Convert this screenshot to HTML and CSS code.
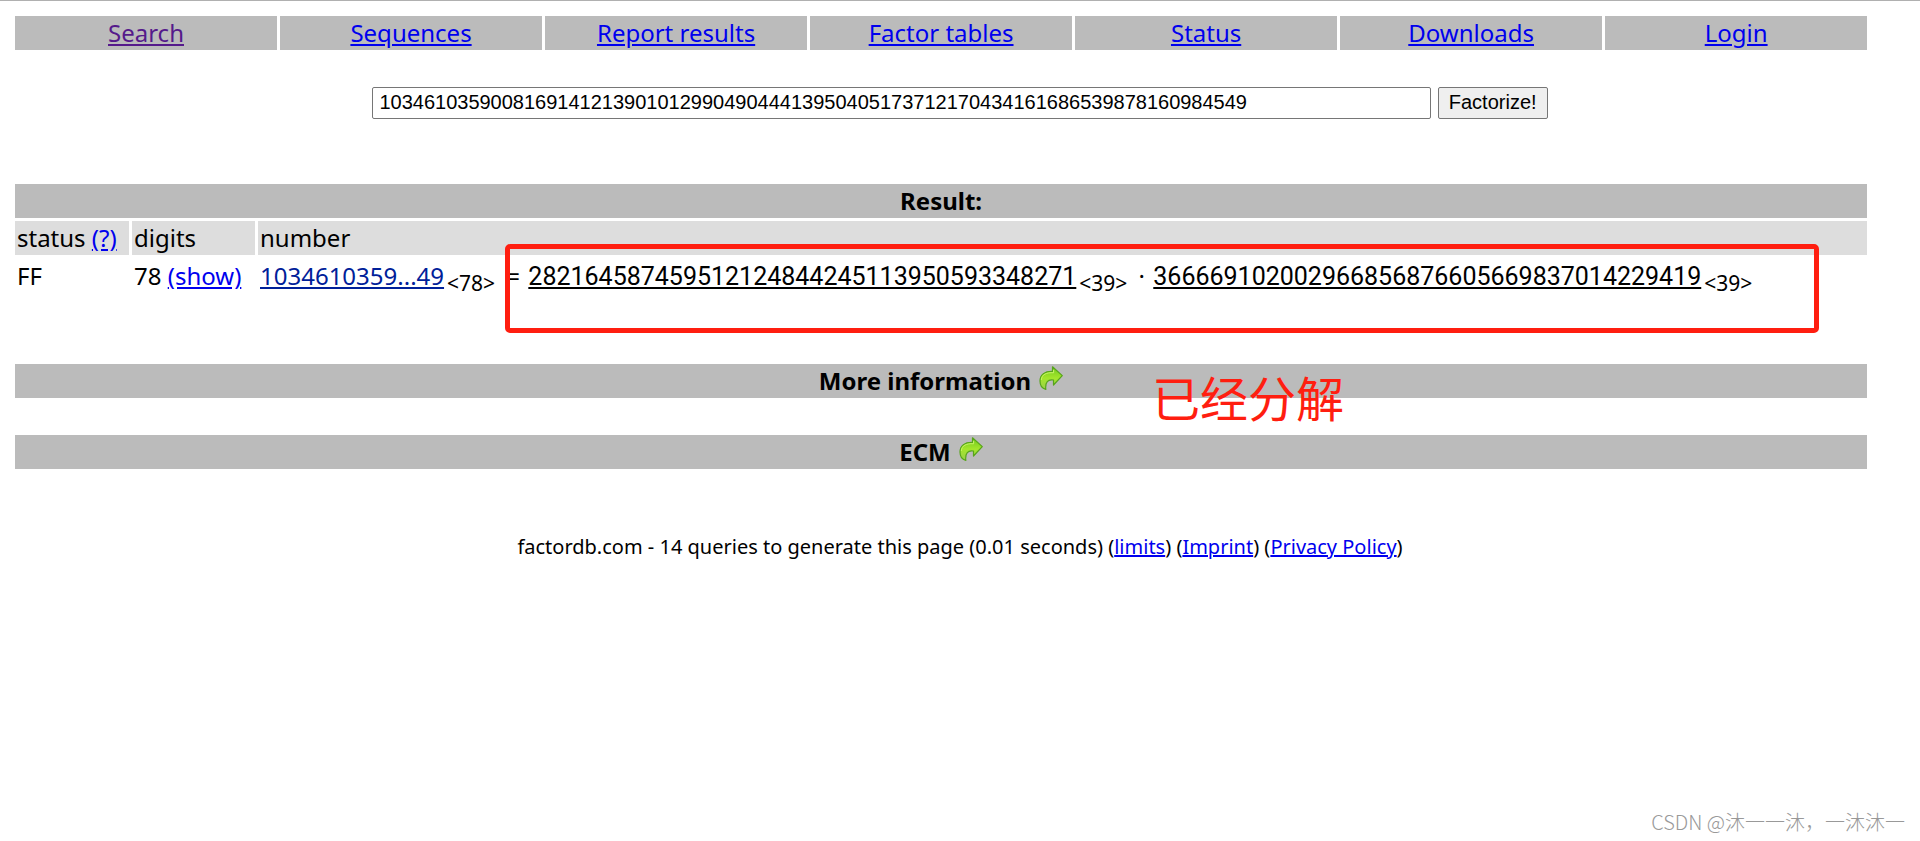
FILE: index.html
```
<!DOCTYPE html>
<html lang="en">
<head>
    <meta charset="UTF-8">
    <meta name="viewport" content="width=device-width, initial-scale=1.0">
    <title>factordb.com</title>
    <link rel="stylesheet" href="styles.css">
</head>
<body>
    <nav class="menu">
        <a class="visited" href="#search">Search</a>
        <a href="#sequences">Sequences</a>
        <a href="#report">Report results</a>
        <a href="#tables">Factor tables</a>
        <a href="#status">Status</a>
        <a href="#downloads">Downloads</a>
        <a href="#login">Login</a>
    </nav>

    <form class="search" id="search">
        <input class="query" type="text" name="query" aria-label="Number" value="103461035900816914121390101299049044413950405173712170434161686539878160984549">
        <button class="btn" type="submit">Factorize!</button>
    </form>

    <div class="result">
        <table class="result-table">
            <thead>
                <tr>
                    <th class="bar" colspan="3">Result:</th>
                </tr>
                <tr class="columns">
                    <th class="col-status">status <a href="#status-help">(?)</a></th>
                    <th class="col-digits">digits</th>
                    <th>number</th>
                </tr>
            </thead>
            <tbody>
                <tr>
                    <td>FF</td>
                    <td>78 <a href="#show">(show)</a></td>
                    <td><a class="composite" href="#n">1034610359...49</a><sub>&lt;78&gt;</sub> = <a class="prime" href="#p">282164587459512124844245113950593348271</a><sub>&lt;39&gt;</sub> · <a class="prime" href="#q">366669102002966856876605669837014229419</a><sub>&lt;39&gt;</sub></td>
                </tr>
            </tbody>
        </table>
        <div class="mark"></div>
    </div>

    <svg class="defs" aria-hidden="true">
        <defs>
            <linearGradient id="green" x1="0" y1="0" x2="0" y2="1">
                <stop offset="0" stop-color="#6fc81c"/>
                <stop offset="0.5" stop-color="#a4e62c"/>
                <stop offset="1" stop-color="#9ad04a"/>
            </linearGradient>
            <symbol id="arrow" viewBox="0 0 24 24">
                <path d="M13.5 0.8 L23.3 9.6 L14.5 19 V14 C9 13 6 16 6.8 23.4 C3 22.5 1 19.5 1 15 C1 8.5 6 5 13.5 5.4 Z" fill="url(#green)" stroke="#57a51b" stroke-width="1.2" stroke-linejoin="round"/>
                <path d="M14.6 3.8 V6.8 C7.5 6.2 2.6 8.6 2.3 14" fill="none" stroke="#c9f468" stroke-width="1"/>
            </symbol>
        </defs>
    </svg>

    <h2 class="bar section">More information
        <a href="#more" aria-label="Show more information"><svg class="icon"><use href="#arrow"/></svg></a>
        <span class="note" lang="zh">已经分解</span>
    </h2>
    <h2 class="bar section">ECM
        <a href="#ecm" aria-label="Show ECM"><svg class="icon"><use href="#arrow"/></svg></a>
    </h2>

    <footer class="footer">
        factordb.com - 14 queries to generate this page (0.01 seconds) (<a href="#limits">limits</a>) (<a href="#imprint">Imprint</a>) (<a href="#privacy">Privacy Policy</a>)
    </footer>

    <div class="watermark" lang="zh">CSDN @沐一一沐，一沐沐一</div>
</body>
</html>
```
FILE: styles.css
```
html {
    border-top: 1px solid #b0b0b0;
}
body {
    font-family: "Noto Sans", "Open Sans", sans-serif;
    font-size: 24px;
    line-height: 30px;
    background-color: white;
    color: black;
    margin: 15px;
}
a {
    color: #0000ee;
}
.visited {
    color: #551a8b;
}
.menu {
    display: grid;
    grid-template-columns: repeat(7, 1fr);
    gap: 3px;
    width: 98%;
}
.menu a {
    background: #bbbbbb;
    text-align: center;
    padding: 2px;
}
.search {
    display: flex;
    justify-content: center;
    gap: 7px;
    margin: 37px 0 65px;
}
.query,
.btn {
    font-family: "Liberation Sans", Arial, sans-serif;
    font-size: 20px;
    height: 32px;
    box-sizing: border-box;
    border: 1px solid #767676;
    border-radius: 2px;
    color: black;
}
.query {
    width: 56%;
    padding: 0 6px 2px;
}
.btn {
    background: #efefef;
    padding: 0 10px 2px;
}
.result {
    position: relative;
    width: 98%;
    margin-bottom: 34px;
}
.result-table {
    border-collapse: separate;
    border-spacing: 3px;
    margin: -3px;
    width: calc(100% + 6px);
}
.result-table th,
.result-table td {
    padding: 2px;
    text-align: left;
    vertical-align: top;
    white-space: nowrap;
}
.bar {
    background: #bbbbbb;
    font-weight: bold;
}
.result-table .bar {
    text-align: center;
}
.columns th {
    background: #dddddd;
    font-weight: normal;
}
.result-table td {
    padding-top: 3px;
    height: 67px;
}
.col-status {
    width: 110px;
}
.col-digits {
    width: 119px;
}
.composite {
    color: #002099;
}
.prime {
    font-family: Roboto, "Noto Sans", sans-serif;
    font-size: 25px;
    color: black;
    margin-left: 2px;
}
sub {
    font-size: 21px;
    line-height: 0;
    padding: 0 5px 0 3px;
}
/* highlight drawn over the factors */
.mark {
    position: absolute;
    top: 63px;
    left: 490px;
    right: 48px;
    height: 79px;
    border: 5px solid #ff1e10;
    border-radius: 5px;
}
.defs {
    position: absolute;
    width: 0;
    height: 0;
}
.section {
    position: relative;
    width: 98%;
    box-sizing: border-box;
    margin: 0 0 37px;
    padding: 2px;
    font-size: 24px;
    text-align: center;
}
.icon {
    width: 24px;
    height: 24px;
    margin-left: 2px;
}
.note {
    position: absolute;
    top: -4px;
    left: 1137px;
    font-family: "Noto Sans CJK SC", sans-serif;
    font-size: 48px;
    font-weight: normal;
    line-height: 72px;
    color: #ff1e10;
}
.footer {
    margin-top: 63px;
    font-size: 20px;
    text-align: center;
}
.watermark {
    position: absolute;
    right: 15px;
    bottom: 4px;
    font-family: "Noto Sans CJK SC", sans-serif;
    font-size: 20px;
    font-weight: 300;
    color: #999999;
}
```
